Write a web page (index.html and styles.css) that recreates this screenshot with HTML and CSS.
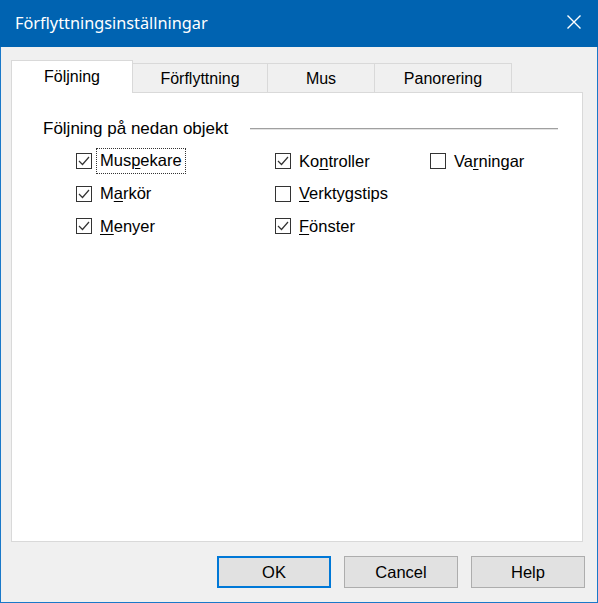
FILE: index.html
```html
<!DOCTYPE html>
<html>
<head>
<meta charset="utf-8">
<link rel="stylesheet" href="styles.css">
</head>
<body>
<div class="window">
  <div class="titlebar">
    <span class="title">Förflyttningsinställningar</span>
    <svg class="close" width="14" height="14" viewBox="0 0 14 14"><path d="M0.5 0.5 L13.5 13.5 M13.5 0.5 L0.5 13.5" stroke="#fff" stroke-width="1.4" fill="none"/></svg>
  </div>
  <div class="content">
    <div class="tabs">
      <div class="tab active">Följning</div>
      <div class="tab t2">Förflyttning</div>
      <div class="tab t3">Mus</div>
      <div class="tab t4">Panorering</div>
    </div>
    <div class="panel">
      <div class="group-head">
        <span class="group-label">Följning på nedan objekt</span>
        <span class="group-line"></span>
      </div>
      <div class="checks">
        <div class="check"><span class="box on"><svg width="14" height="14" viewBox="0 0 14 14"><path d="M2 7 L5.5 10.5 L12 3" stroke="#333" stroke-width="1.2" fill="none"/></svg></span><span class="label focus">Mus<u>p</u>ekare</span></div>
        <div class="check"><span class="box on"><svg width="14" height="14" viewBox="0 0 14 14"><path d="M2 7 L5.5 10.5 L12 3" stroke="#333" stroke-width="1.2" fill="none"/></svg></span><span class="label">Ko<u>n</u>troller</span></div>
        <div class="check"><span class="box"></span><span class="label">Va<u>r</u>ningar</span></div>
        <div class="check"><span class="box on"><svg width="14" height="14" viewBox="0 0 14 14"><path d="M2 7 L5.5 10.5 L12 3" stroke="#333" stroke-width="1.2" fill="none"/></svg></span><span class="label">M<u>a</u>rkör</span></div>
        <div class="check"><span class="box"></span><span class="label"><u>V</u>erktygstips</span></div>
        <div class="check empty"></div>
        <div class="check"><span class="box on"><svg width="14" height="14" viewBox="0 0 14 14"><path d="M2 7 L5.5 10.5 L12 3" stroke="#333" stroke-width="1.2" fill="none"/></svg></span><span class="label"><u>M</u>enyer</span></div>
        <div class="check"><span class="box on"><svg width="14" height="14" viewBox="0 0 14 14"><path d="M2 7 L5.5 10.5 L12 3" stroke="#333" stroke-width="1.2" fill="none"/></svg></span><span class="label"><u>F</u>önster</span></div>
      </div>
    </div>
    <div class="buttons">
      <div class="btn default">OK</div>
      <div class="btn">Cancel</div>
      <div class="btn">Help</div>
    </div>
  </div>
</div>
</body>
</html>
```
FILE: styles.css
```css
html, body {
  margin: 0;
  padding: 0;
  background: #f0f0f0;
}
.window {
  width: 598px;
  height: 603px;
  box-sizing: border-box;
  border: 1px solid #1a79c9;
  border-top: none;
  background: #f0f0f0;
  display: flex;
  flex-direction: column;
  font-family: "Liberation Sans", Arial, sans-serif;
  font-size: 16px;
  color: #000;
}
.titlebar {
  height: 47px;
  background: #0063b1;
  margin: 0 -1px;
  display: flex;
  align-items: center;
  justify-content: space-between;
  padding: 0 17px 0 15px;
  box-sizing: border-box;
  flex: none;
}
.title {
  color: #fff;
  font-family: "Noto Sans", "Open Sans", sans-serif;
  font-size: 16.3px;
  margin-top: -1px;
}
.close {
  margin-top: -4px;
}
.content {
  flex: 1;
  display: flex;
  flex-direction: column;
  padding: 13px 12px 0 10px;
}
.tabs {
  display: flex;
  align-items: flex-end;
  height: 32px;
  position: relative;
  z-index: 1;
}
.tab {
  height: 29px;
  box-sizing: border-box;
  border: 1px solid #d9d9d9;
  border-bottom: none;
  border-left: none;
  background: #f0f0f0;
  display: flex;
  align-items: center;
  justify-content: center;
  padding-top: 1px;
}
.tab.active {
  width: 122px;
  height: 33px;
  background: #fff;
  border-left: 1px solid #d9d9d9;
  margin-bottom: -1px;
  padding-bottom: 2px;
}
.t2 { width: 135px; }
.t3 { width: 107px; }
.t4 { width: 137px; }
.panel {
  width: 572px;
  height: 450px;
  box-sizing: border-box;
  border: 1px solid #d9d9d9;
  background: #fff;
  padding: 25px 24px 0 31px;
}
.group-head {
  display: flex;
  align-items: center;
  height: 22px;
}
.group-label {
  font-size: 17px;
  white-space: nowrap;
}
.group-line {
  margin-left: 22px;
  width: 308px;
  height: 1px;
  background: #a0a0a0;
  border-bottom: 1px solid #e3e3e3;
}
.checks {
  display: grid;
  grid-template-columns: 199px 155px 120px;
  grid-auto-rows: 32.5px;
  margin-left: 33px;
  margin-top: 5px;
}
.check {
  display: flex;
  align-items: center;
}
.box {
  width: 16px;
  height: 16px;
  box-sizing: border-box;
  border: 1px solid #333;
  background: #fff;
  display: flex;
  align-items: center;
  justify-content: center;
  flex: none;
}
.box svg { display: block; }
.label {
  margin-left: 8px;
  white-space: nowrap;
  font-size: 16.5px;
}
.label u {
  text-underline-offset: 2px;
}
.label.focus {
  outline: 1px dotted #333;
  outline-offset: 0;
  padding: 2px 3px 3px 3px;
  margin-left: 5px;
}
.buttons {
  display: flex;
  justify-content: flex-end;
  gap: 13px;
  margin-top: 14px;
  margin-right: 0;
}
.btn {
  width: 114px;
  height: 32px;
  box-sizing: border-box;
  border: 1px solid #adadad;
  background: #e1e1e1;
  display: flex;
  align-items: center;
  justify-content: center;
  font-size: 16.5px;
}
.btn.default {
  border: 2px solid #0078d7;
}
```
